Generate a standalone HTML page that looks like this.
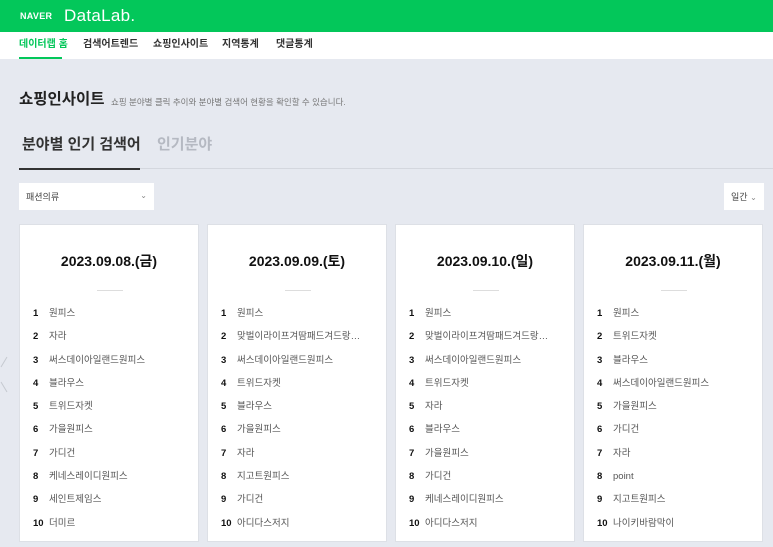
<!DOCTYPE html>
<html><head><meta charset="utf-8"><style>
*{margin:0;padding:0;box-sizing:border-box}
body{width:773px;height:547px;overflow:hidden;background:#e6e9f0;font-family:"Liberation Sans","Noto Sans CJK KR",sans-serif;position:relative}
.hd{position:absolute;left:0;top:0;width:773px;height:32px;background:#03c75a;color:#fff}
.nav{position:absolute;top:32px;left:0;width:773px;height:27px;background:#fff;font-size:10px;font-weight:bold;color:#333}
.nav span{position:absolute;top:7px;line-height:12px}
.card{position:absolute;top:224px;width:180px;height:318px;background:#fff;border:1px solid #dde0e6}
.card h3{position:absolute;top:27px;left:0;width:100%;text-align:center;font-size:14px;line-height:18px;font-weight:bold;color:#111}
.card .sep{position:absolute;top:65px;left:77px;width:26px;height:1px;background:#ddd}
.card ol{list-style:none;position:absolute;top:82px;left:13px}
.card li{height:23.3px;line-height:14px;font-size:9.5px;color:#555;white-space:nowrap}
.card li b{display:inline-block;width:16px;color:#111;font-size:9.5px}
</style></head><body>
<div class="hd"><span style="position:absolute;left:20px;top:11px;font-size:9px;line-height:10px;font-weight:900;letter-spacing:.3px">NAVER</span><span style="position:absolute;left:64px;top:7px;font-size:17px;line-height:18px;font-weight:300;letter-spacing:.3px">DataLab.</span></div>
<div class="nav"><span style="left:19px;color:#03c75a">데이터랩 홈</span><span style="left:83px">검색어트렌드</span><span style="left:153px">쇼핑인사이트</span><span style="left:222px">지역통계</span><span style="left:276px">댓글통계</span><div style="position:absolute;left:19px;top:25px;width:43px;height:2px;background:#03c75a"></div></div>
<div style="position:absolute;left:19px;top:90px;font-size:15.5px;line-height:20px;font-weight:bold;color:#222">쇼핑인사이트</div>
<div style="position:absolute;left:111px;top:96px;font-size:8.5px;line-height:12px;color:#777">쇼핑 분야별 클릭 추이와 분야별 검색어 현황을 확인할 수 있습니다.</div>
<div style="position:absolute;left:22px;top:135px;font-size:15px;line-height:20px;font-weight:bold;color:#333">분야별 인기 검색어</div>
<div style="position:absolute;left:157px;top:135px;font-size:15px;line-height:20px;font-weight:bold;color:#b5b9c2">인기분야</div>
<div style="position:absolute;left:19px;top:168px;width:754px;height:1px;background:#d4d7de"></div>
<div style="position:absolute;left:19px;top:168px;width:121px;height:2px;background:#333"></div>
<div style="position:absolute;left:19px;top:183px;width:135px;height:27px;background:#fff;font-size:9px;line-height:12px;color:#444;padding:8px 0 0 7px">패션의류<span style="position:absolute;right:7px;top:7px;color:#888;font-size:8px">⌄</span></div>
<div style="position:absolute;left:724px;top:183px;width:40px;height:27px;background:#fff;font-size:9px;line-height:12px;color:#444;padding:8px 0 0 7px">일간 <span style="color:#888;font-size:8px">⌄</span></div>
<svg style="position:absolute;left:0;top:355px" width="8" height="50"><path d="M7 2 L1 12 M1 27 L7 37" stroke="#c5c9d0" stroke-width="1" fill="none"/></svg>
<div class="card" style="left:19px"><h3>2023.09.08.(금)</h3><div class="sep"></div><ol>
<li><b>1</b>원피스</li><li><b>2</b>자라</li><li><b>3</b>써스데이아일랜드원피스</li><li><b>4</b>블라우스</li><li><b>5</b>트위드자켓</li><li><b>6</b>가을원피스</li><li><b>7</b>가디건</li><li><b>8</b>케네스레이디원피스</li><li><b>9</b>세인트제임스</li><li><b>10</b>더미르</li></ol></div>
<div class="card" style="left:207px"><h3>2023.09.09.(토)</h3><div class="sep"></div><ol>
<li><b>1</b>원피스</li><li><b>2</b>맞벌이라이프겨땀패드겨드랑…</li><li><b>3</b>써스데이아일랜드원피스</li><li><b>4</b>트위드자켓</li><li><b>5</b>블라우스</li><li><b>6</b>가을원피스</li><li><b>7</b>자라</li><li><b>8</b>지고트원피스</li><li><b>9</b>가디건</li><li><b>10</b>아디다스저지</li></ol></div>
<div class="card" style="left:395px"><h3>2023.09.10.(일)</h3><div class="sep"></div><ol>
<li><b>1</b>원피스</li><li><b>2</b>맞벌이라이프겨땀패드겨드랑…</li><li><b>3</b>써스데이아일랜드원피스</li><li><b>4</b>트위드자켓</li><li><b>5</b>자라</li><li><b>6</b>블라우스</li><li><b>7</b>가을원피스</li><li><b>8</b>가디건</li><li><b>9</b>케네스레이디원피스</li><li><b>10</b>아디다스저지</li></ol></div>
<div class="card" style="left:583px"><h3>2023.09.11.(월)</h3><div class="sep"></div><ol>
<li><b>1</b>원피스</li><li><b>2</b>트위드자켓</li><li><b>3</b>블라우스</li><li><b>4</b>써스데이아일랜드원피스</li><li><b>5</b>가을원피스</li><li><b>6</b>가디건</li><li><b>7</b>자라</li><li><b>8</b>point</li><li><b>9</b>지고트원피스</li><li><b>10</b>나이키바람막이</li></ol></div>
</body></html>
